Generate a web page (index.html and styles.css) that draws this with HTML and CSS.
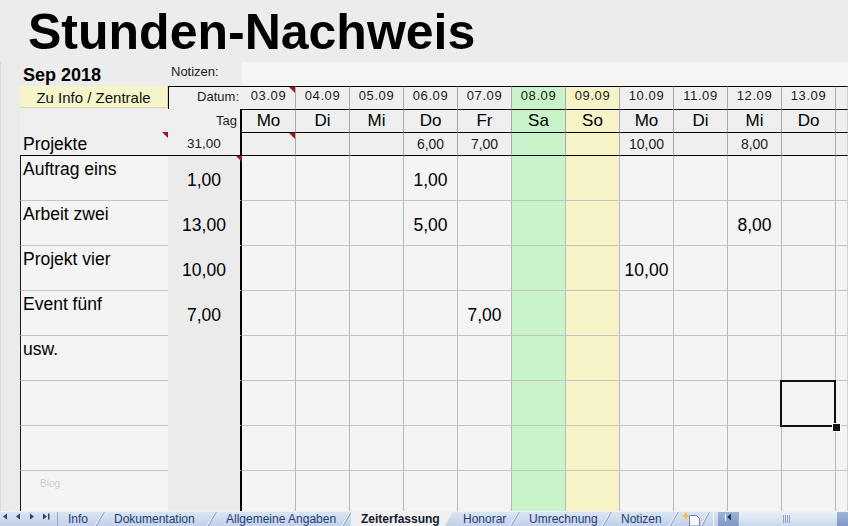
FILE: index.html
```html
<!DOCTYPE html>
<html lang="de">
<head>
<meta charset="utf-8">
<title>Stunden-Nachweis</title>
<link rel="stylesheet" href="styles.css">
</head>
<body>
<div class="sheet">
  <div class="title">Stunden-Nachweis</div>
  <div class="strip"></div>

  <!-- row: month / notes -->
  <div class="month">Sep 2018</div>
  <div class="notes-label">Notizen:</div>
  <div class="notes"></div>

  <!-- row: dates -->
  <div class="btn-cell"><div class="btn">Zu Info / Zentrale</div></div>
  <div class="datum">Datum:</div>
  <div class="h date mk">03.09</div>
  <div class="h date">04.09</div>
  <div class="h date">05.09</div>
  <div class="h date">06.09</div>
  <div class="h date">07.09</div>
  <div class="h date sa">08.09</div>
  <div class="h date so">09.09</div>
  <div class="h date">10.09</div>
  <div class="h date">11.09</div>
  <div class="h date">12.09</div>
  <div class="h date">13.09</div>
  <div class="h date last"></div>

  <!-- row: weekday -->
  <div class="blank"></div>
  <div class="tag">Tag</div>
  <div class="h day">Mo</div>
  <div class="h day">Di</div>
  <div class="h day">Mi</div>
  <div class="h day">Do</div>
  <div class="h day">Fr</div>
  <div class="h day sa">Sa</div>
  <div class="h day so">So</div>
  <div class="h day">Mo</div>
  <div class="h day">Di</div>
  <div class="h day">Mi</div>
  <div class="h day">Do</div>
  <div class="h day last"></div>

  <!-- row: totals -->
  <div class="proj mk">Projekte</div>
  <div class="total">31,00</div>
  <div class="h sum mk"></div>
  <div class="h sum"></div>
  <div class="h sum"></div>
  <div class="h sum">6,00</div>
  <div class="h sum">7,00</div>
  <div class="h sum sa"></div>
  <div class="h sum so"></div>
  <div class="h sum">10,00</div>
  <div class="h sum"></div>
  <div class="h sum">8,00</div>
  <div class="h sum"></div>
  <div class="h sum last"></div>

  <!-- data row 1 -->
  <div class="na r1">Auftrag eins</div>
  <div class="nb r1 mk">1,00</div>
  <div class="c r1"></div>
  <div class="c r1"></div>
  <div class="c r1"></div>
  <div class="c r1">1,00</div>
  <div class="c r1"></div>
  <div class="c r1 sa"></div>
  <div class="c r1 so"></div>
  <div class="c r1"></div>
  <div class="c r1"></div>
  <div class="c r1"></div>
  <div class="c r1"></div>
  <div class="c r1 last"></div>

  <!-- data row 2 -->
  <div class="na">Arbeit zwei</div>
  <div class="nb">13,00</div>
  <div class="c"></div>
  <div class="c"></div>
  <div class="c"></div>
  <div class="c">5,00</div>
  <div class="c"></div>
  <div class="c sa"></div>
  <div class="c so"></div>
  <div class="c"></div>
  <div class="c"></div>
  <div class="c">8,00</div>
  <div class="c"></div>
  <div class="c last"></div>

  <!-- data row 3 -->
  <div class="na">Projekt vier</div>
  <div class="nb">10,00</div>
  <div class="c"></div>
  <div class="c"></div>
  <div class="c"></div>
  <div class="c"></div>
  <div class="c"></div>
  <div class="c sa"></div>
  <div class="c so"></div>
  <div class="c">10,00</div>
  <div class="c"></div>
  <div class="c"></div>
  <div class="c"></div>
  <div class="c last"></div>

  <!-- data row 4 -->
  <div class="na">Event fünf</div>
  <div class="nb">7,00</div>
  <div class="c"></div>
  <div class="c"></div>
  <div class="c"></div>
  <div class="c"></div>
  <div class="c">7,00</div>
  <div class="c sa"></div>
  <div class="c so"></div>
  <div class="c"></div>
  <div class="c"></div>
  <div class="c"></div>
  <div class="c"></div>
  <div class="c last"></div>

  <!-- data row 5 -->
  <div class="na">usw.</div>
  <div class="nb"></div>
  <div class="c"></div>
  <div class="c"></div>
  <div class="c"></div>
  <div class="c"></div>
  <div class="c"></div>
  <div class="c sa"></div>
  <div class="c so"></div>
  <div class="c"></div>
  <div class="c"></div>
  <div class="c"></div>
  <div class="c"></div>
  <div class="c last"></div>

  <!-- data row 6 -->
  <div class="na"></div>
  <div class="nb"></div>
  <div class="c"></div>
  <div class="c"></div>
  <div class="c"></div>
  <div class="c"></div>
  <div class="c"></div>
  <div class="c sa"></div>
  <div class="c so"></div>
  <div class="c"></div>
  <div class="c"></div>
  <div class="c"></div>
  <div class="c sel"></div>
  <div class="c last"></div>

  <!-- data row 7 -->
  <div class="na"></div>
  <div class="nb"></div>
  <div class="c"></div>
  <div class="c"></div>
  <div class="c"></div>
  <div class="c"></div>
  <div class="c"></div>
  <div class="c sa"></div>
  <div class="c so"></div>
  <div class="c"></div>
  <div class="c"></div>
  <div class="c"></div>
  <div class="c"></div>
  <div class="c last"></div>

  <!-- data row 8 -->
  <div class="na"><span class="wm">Blog</span></div>
  <div class="nb"></div>
  <div class="c"></div>
  <div class="c"></div>
  <div class="c"></div>
  <div class="c"></div>
  <div class="c"></div>
  <div class="c sa"></div>
  <div class="c so"></div>
  <div class="c"></div>
  <div class="c"></div>
  <div class="c"></div>
  <div class="c"></div>
  <div class="c last"></div>

  <!-- sheet tabs -->
  <div class="tabs">
    <div class="nav">
      <svg width="57" height="15" viewBox="0 0 57 15">
        <path d="M7 2.5 L3 5.5 L7 8.5Z" fill="#27457a"/>
        <path d="M20 2.5 L16 5.5 L20 8.5Z" fill="#27457a"/>
        <path d="M30 2.5 L34 5.5 L30 8.5Z" fill="#27457a"/>
        <path d="M43 2.5 L47 5.5 L43 8.5Z" fill="#27457a"/>
        <rect x="48" y="2.5" width="1.5" height="6" fill="#27457a"/>
      </svg>
    </div>
    <div class="tab">Info</div>
    <div class="tab">Dokumentation</div>
    <div class="tab">Allgemeine Angaben</div>
    <div class="tab on">Zeiterfassung</div>
    <div class="tab">Honorar</div>
    <div class="tab">Umrechnung</div>
    <div class="tab">Notizen</div>
    <div class="newtab">
      <svg width="32" height="15" viewBox="0 0 32 15">
        <path d="M11.5 4.5 H18.5 L21.5 7.5 V15 H11.5Z" fill="#f6f8fc" stroke="#6a83b0"/>
        <path d="M8 0.5 L9.2 3.6 L12.3 4.8 L9.2 6 L8 9.1 L6.8 6 L3.7 4.8 L6.8 3.6Z" fill="#f0c23a"/>
        <path d="M23 15 L31 0" stroke="#ffffff" stroke-width="1"/>
        <path d="M24 15 L32 0" stroke="#8199c2" stroke-width="1"/>
      </svg>
    </div>
    <div class="scroll">
      <svg width="138" height="15" viewBox="0 0 138 15">
        <defs>
          <linearGradient id="th" x1="0" y1="0" x2="0" y2="1">
            <stop offset="0" stop-color="#edf2f9"/>
            <stop offset="1" stop-color="#cbd8ec"/>
          </linearGradient>
          <linearGradient id="bt" x1="0" y1="0" x2="0" y2="1">
            <stop offset="0" stop-color="#9fb5da"/>
            <stop offset="1" stop-color="#7f99c5"/>
          </linearGradient>
        </defs>
        <rect x="3" y="1" width="1" height="14" fill="#ffffff"/>
        <rect x="8" y="0" width="20" height="15" fill="url(#bt)"/>
        <rect x="15" y="3" width="1" height="7" fill="#ffffff"/>
        <path d="M21 2.5 L17 6 L21 9.5Z" fill="#1d3a70"/>
        <rect x="28" y="0" width="99" height="15" fill="url(#th)"/>
        <rect x="28" y="0" width="1" height="15" fill="#9fb2d2"/>
        <rect x="73" y="4" width="1" height="8" fill="#8ea3c6"/>
        <rect x="75" y="4" width="1" height="8" fill="#8ea3c6"/>
        <rect x="77" y="4" width="1" height="8" fill="#8ea3c6"/>
        <rect x="79" y="4" width="1" height="8" fill="#8ea3c6"/>
        <rect x="127" y="0" width="11" height="15" fill="url(#bt)"/>
      </svg>
    </div>
  </div>
</div>
</body>
</html>
```

FILE: styles.css
```css
* {
  box-sizing: border-box;
  margin: 0;
  padding: 0;
}

html,
body {
  width: 848px;
  height: 526px;
  overflow: hidden;
}

body {
  background: #efefef;
  font-family: "Liberation Sans", Arial, Helvetica, sans-serif;
  color: #000;
}

.sheet {
  display: grid;
  grid-template-columns: 20px 148px 74px repeat(11, 54px) 12px;
  grid-template-rows: 62px 24px 23px 23px 23px repeat(7, 45px) 41px 15px;
  width: 848px;
  height: 526px;
  overflow: hidden;
}

.title {
  grid-row: 1;
  grid-column: 1 / -1;
  background: #ececec;
  font-size: 50px;
  font-weight: 700;
  line-height: 50px;
  padding: 7px 0 0 28px;
  white-space: nowrap;
}

.strip {
  grid-row: 2 / 14;
  grid-column: 1;
  background: #ebebeb;
  border-left: 1px solid #dcdcdc;
}

.month {
  background: #ececec;
  font-size: 18px;
  font-weight: 700;
  line-height: 24px;
  padding: 1px 0 0 3px;
  white-space: nowrap;
}

.notes-label {
  background: #ececec;
  font-size: 13px;
  line-height: 19px;
  padding-left: 3px;
  color: #222;
}

.notes {
  grid-column: span 12;
  background: #f5f5f5;
}

.btn-cell {
  background: #ececec;
}

.btn {
  height: 22px;
  background: #f5f5c9;
  border-right: 1px solid #d9d9b4;
  border-bottom: 1px solid #d9d9b4;
  font-size: 15px;
  line-height: 21px;
  padding-top: 1px;
  text-align: center;
  color: #111;
  white-space: nowrap;
}

.datum {
  background: #efefef;
  border-top: 1px solid #000;
  border-left: 1px solid #000;
  font-size: 13px;
  line-height: 20px;
  text-align: right;
  padding-right: 3px;
  color: #222;
}

.blank {
  background: #efefef;
}

.tag {
  background: #efefef;
  border-right: 2px solid #000;
  font-size: 13px;
  line-height: 22px;
  padding: 1px 3px 0 0;
  text-align: right;
  color: #222;
}

.proj {
  background: #efefef;
  font-size: 17.5px;
  line-height: 22px;
  padding: 1px 0 0 3px;
}

.total {
  background: #efefef;
  border-right: 2px solid #000;
  font-size: 13.5px;
  line-height: 22px;
  padding-top: 1px;
  text-align: center;
  color: #1a1a1a;
}

.h {
  background: #efefef;
  border-right: 1px solid #a9a9a9;
  border-top: 1px solid #000;
  text-align: center;
  color: #1a1a1a;
  overflow: hidden;
  white-space: nowrap;
}

.date {
  font-size: 13px;
  line-height: 18px;
  letter-spacing: 0.6px;
}

.day {
  font-size: 17px;
  line-height: 21px;
  color: #000;
}

.sum {
  font-size: 14px;
  line-height: 21px;
  padding-top: 1px;
}

.na {
  background: #f4f4f4;
  border-left: 1px solid #1a1a1a;
  border-top: 1px solid #c6c6c6;
  font-size: 17.5px;
  line-height: 20px;
  padding: 3px 0 0 2px;
  white-space: nowrap;
}

.nb {
  background: #ebebeb;
  border-right: 2px solid #000;
  border-top: 1px solid transparent;
  font-size: 17.5px;
  line-height: 20px;
  padding-top: 14px;
  text-align: center;
}

.c {
  background: #f4f4f4;
  border-right: 1px solid #bababa;
  border-top: 1px solid #c4c4c4;
  font-size: 17.5px;
  line-height: 20px;
  padding-top: 14px;
  text-align: center;
}

.r1 {
  border-top-color: #000;
}

.sa {
  background: #c9f3c9;
}

.so {
  background: #f6f4c7;
}

.last {
  border-right-color: #d2d2d2;
}

.wm {
  display: block;
  font-size: 10px;
  line-height: 12px;
  padding: 4px 0 0 17px;
  color: #cdcdcd;
}

/* comment markers */
.mk {
  position: relative;
}

.mk::after {
  content: "";
  position: absolute;
  top: 0;
  right: 0;
  border-top: 6px solid #9b1b1b;
  border-left: 6px solid transparent;
}

.nb.mk::after {
  right: -2px;
}

/* active cell */
.sel {
  position: relative;
}

.sel::before {
  content: "";
  position: absolute;
  left: -2px;
  top: -1px;
  right: -1px;
  bottom: -2px;
  border: 2px solid #111;
  z-index: 1;
}

.sel::after {
  content: "";
  position: absolute;
  left: 50px;
  top: 42px;
  width: 7px;
  height: 7px;
  background: #111;
  border: 1px solid #fff;
  z-index: 2;
}

/* sheet tabs */
.tabs {
  grid-row: 14;
  grid-column: 1 / -1;
  display: grid;
  grid-template-columns: 58px 46px 112px 135px 102px 66px 92px 67px 32px 138px;
  background: linear-gradient(#dae4f3, #c2d2ea);
  border-top: 1px solid #eef2f8;
  font-size: 12px;
  line-height: 14px;
  color: #1f3c73;
  white-space: nowrap;
  overflow: hidden;
}

.nav {
  border-right: 1px solid #93a9cc;
}

.nav svg,
.newtab svg,
.scroll svg {
  display: block;
  margin-top: -1px;
}

.tab {
  position: relative;
  padding-left: 10px;
}

.tab::after {
  content: "";
  position: absolute;
  right: 3px;
  top: -1px;
  width: 1px;
  height: 15px;
  background: #8199c2;
  box-shadow: -1px 0 0 #ffffff;
  transform: skewX(-30deg);
}

.tab.on {
  background: #f0f0f0;
  font-weight: 700;
  color: #111a33;
  margin-top: -1px;
  padding-top: 1px;
  clip-path: polygon(0 0, 100% 0, calc(100% - 8px) 100%, 0 100%);
}

.tab.on::after {
  display: none;
}
```
